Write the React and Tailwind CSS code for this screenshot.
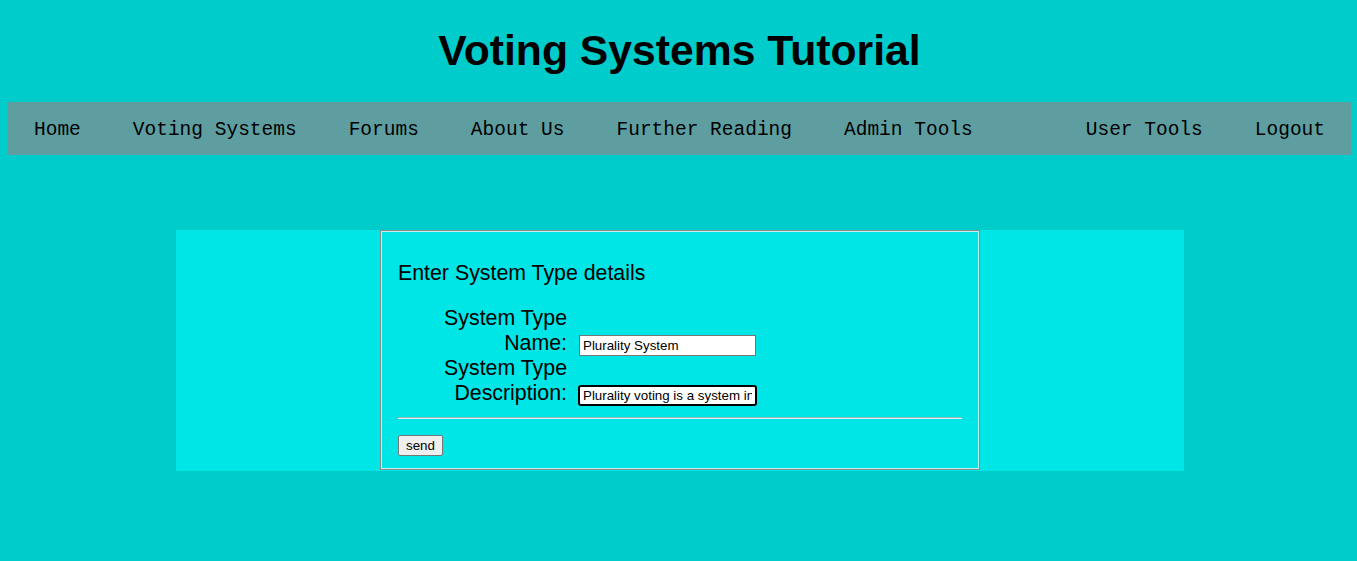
import React from "react";

const leftItems = ["Home", "Voting Systems", "Forums", "About Us", "Further Reading", "Admin Tools"];
const rightItems = ["User Tools", "Logout"];

export default function App() {
  return (
    <div className="min-h-[561px] bg-[#00cccc] pl-2 pr-[6px] pt-[21px] font-['Liberation_Sans',Arial,sans-serif] text-black">
      <h1 className="text-center text-[42.7px] font-bold leading-[58px]">Voting Systems Tutorial</h1>
      <nav className="mt-[23px] flex h-[53px] items-center justify-between bg-[#5f9ea0] pt-[5px] font-['Liberation_Mono',monospace] text-[19.5px]">
        <div className="flex">
          {leftItems.map((t) => (
            <span key={t} className="whitespace-pre px-[26px]">{t}</span>
          ))}
        </div>
        <div className="flex">
          {rightItems.map((t) => (
            <span key={t} className="whitespace-pre px-[26px]">{t}</span>
          ))}
        </div>
      </nav>
      <div className="ml-[168px] mt-[75px] flex h-[241px] w-[1008px] items-start justify-center bg-[#00e6e6]">
        <div className="flex h-[240px] w-[600px] flex-col border border-solid border-[#8a8a8a] shadow-[inset_1px_1px_0_#c0eeee,inset_-1px_-1px_0_#c0eeee] px-[17px]">
          <div className="mt-[30px] text-[21.33px] leading-[24px]">Enter System Type details</div>
          <div className="mt-[21px] flex items-end">
            <div className="w-[169px] text-right text-[21.33px] leading-[25px]">System Type<br />Name:</div>
            <input
              readOnly
              value="Plurality System"
              className="ml-[12px] h-[21px] w-[177px] border border-[#767676] bg-white px-[3px] text-[13.33px] leading-none text-black outline-none"
            />
          </div>
          <div className="flex items-end">
            <div className="w-[169px] text-right text-[21.33px] leading-[25px]">System Type<br />Description:</div>
            <input
              readOnly
              value="Plurality voting is a system in which each voter votes for one candidate"
              className="ml-[11px] h-[21px] w-[179px] rounded-[3px] border-2 border-black bg-white px-[3px] text-[13.33px] leading-none text-black outline-none"
            />
          </div>
          <div className="mt-[11px] h-[2px] border-t border-solid border-[#9fb5b5] bg-[#d8f4f4]"></div>
          <div className="mt-[14px]">
            <button className="h-[21px] w-[45px] rounded-[2px] border border-[#767676] bg-[#efefef] text-[13.33px] leading-none text-black">send</button>
          </div>
        </div>
      </div>
    </div>
  );
}
